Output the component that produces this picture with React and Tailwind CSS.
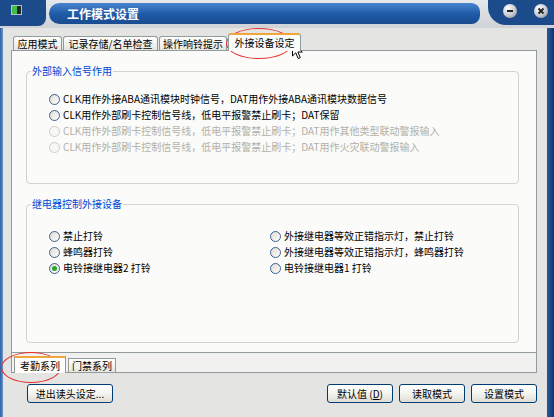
import React from "react";
import clsx from "clsx";

const Radio = ({ label, checked, disabled }) => (
  <div className="flex items-center h-[16px]">
    <span
      className={clsx(
        "w-[11px] h-[11px] rounded-full border flex items-center justify-center shrink-0",
        disabled
          ? "border-[#cfcdc2] bg-[#f7f7f5]"
          : "border-[#3d6193] bg-gradient-to-br from-[#dedbd3] to-white"
      )}
    >
      {checked && <span className="w-[5px] h-[5px] rounded-full bg-[#2aa52a]" />}
    </span>
    <span className={clsx("ml-[3px] whitespace-nowrap", disabled ? "text-[#b2b0a5]" : "text-black")}>
      {label}
    </span>
  </div>
);

const Tab = ({ label, width, active }) =>
  active ? (
    <div
      className="relative z-10 -mb-px h-[18px] flex items-center justify-center rounded-t-[3px] border-x border-t-[2px] border-x-[#919b9c] border-t-[#f2a53a] bg-[#fbfbf9] whitespace-nowrap"
      style={{ width }}
    >
      {label}
    </div>
  ) : (
    <div
      className="h-[14px] flex items-center justify-center rounded-t-[3px] border border-b-0 border-[#919b9c] bg-gradient-to-b from-white to-[#e6e6e0] whitespace-nowrap"
      style={{ width }}
    >
      {label}
    </div>
  );

const Button = ({ children, className }) => (
  <button
    className={clsx(
      "h-[19px] rounded-[3px] border border-[#003c74] bg-gradient-to-b from-white via-[#f4f4f0] to-[#dedcd2] text-black flex items-center justify-center whitespace-nowrap",
      className
    )}
  >
    {children}
  </button>
);

const Sphere = ({ children }) => (
  <div className="w-[14px] h-[14px] rounded-full bg-[radial-gradient(circle_at_35%_30%,#ffffff,#c4c8ce_55%,#7d848e)] flex items-center justify-center">
    {children}
  </div>
);

export default function App() {
  return (
    <div className="relative w-[554px] h-[417px] overflow-hidden bg-[#e4e4e2] font-['Noto_Sans_CJK_SC','Noto_Sans',sans-serif] text-[10px] leading-[12px] text-black">
      {/* title bar */}
      <div className="flex h-[28px] bg-gradient-to-b from-[#e6e8eb] to-[#cfd2d6]">
        <div className="w-[46px] h-[26px] bg-[#1b4b8b] rounded-br-[8px] pl-[11px] pt-[5px]">
          <div className="w-[11px] h-[10px] border border-[#b8c0c8] bg-[#1d2a22] flex">
            <div className="w-[5px] bg-[#3fbf4a]" />
          </div>
        </div>
        <div className="flex-1 pt-[3px] pl-[3px] pr-[8px]">
          <div className="h-[21px] rounded-l-[11px] rounded-r-[9px] bg-gradient-to-b from-[#4a86cf] via-[#1f5ba8] to-[#1a4c8f] pl-[18px] flex items-center text-white font-bold text-[12px]">
            工作模式设置
          </div>
        </div>
        <div className="w-[66px] h-[25px] bg-[#1b4b8b] rounded-bl-[18px] flex items-start pt-[4px] pl-[15px] gap-[17px]">
          <Sphere>
            <div className="w-[6px] h-[2px] bg-[#222]" />
          </Sphere>
          <Sphere>
            <svg width="8" height="8" viewBox="0 0 8 8">
              <path d="M1.5 1.5 L6.5 6.5 M6.5 1.5 L1.5 6.5" stroke="#222" strokeWidth="1.8" />
            </svg>
          </Sphere>
        </div>
      </div>

      {/* body */}
      <div className="flex h-[389px]">
        <div className="w-[3px] bg-gradient-to-r from-[#2a5ea3] to-[#6f96c8]" />
        <div className="flex-1 flex flex-col pl-[8px] pr-[10px]">
          <div className="mt-[5px] h-[17px] flex items-end pl-[2px] gap-[1px]">
            <Tab label="应用模式" width={49} />
            <Tab label="记录存储/名单检查" width={95} />
            <Tab label="操作响铃提示" width={68} />
            <Tab label="外接设备设定" width={73} active />
          </div>

          <div className="h-[303px] border border-[#919b9c] bg-[#fbfbf9] pl-[14px] pt-[14px]">
            <fieldset className="w-[493px] h-[119px] rounded-[4px] border border-[#d3d3cb]">
              <legend className="ml-[4px] px-[1px] text-[#0046d5]">外部输入信号作用</legend>
              <div className="pt-[14px] pl-[22px]">
                <Radio label="CLK用作外接ABA通讯模块时钟信号，DAT用作外接ABA通讯模块数据信号" />
                <Radio label="CLK用作外部刷卡控制信号线，低电平报警禁止刷卡；DAT保留" />
                <Radio label="CLK用作外部刷卡控制信号线，低电平报警禁止刷卡；DAT用作其他类型联动警报输入" disabled />
                <Radio label="CLK用作外部刷卡控制信号线，低电平报警禁止刷卡；DAT用作火灾联动警报输入" disabled />
              </div>
            </fieldset>

            <fieldset className="mt-[14px] w-[493px] h-[145px] rounded-[4px] border border-[#d3d3cb]">
              <legend className="ml-[4px] px-[1px] text-[#0046d5]">继电器控制外接设备</legend>
              <div className="pt-[18px] pl-[22px] grid grid-cols-[221px_1fr]">
                <Radio label="禁止打铃" />
                <Radio label="外接继电器等效正错指示灯，禁止打铃" />
                <Radio label="蜂鸣器打铃" />
                <Radio label="外接继电器等效正错指示灯，蜂鸣器打铃" />
                <Radio label="电铃接继电器2 打铃" checked />
                <Radio label="电铃接继电器1 打铃" />
              </div>
            </fieldset>
          </div>

          <div className="h-[20px] flex items-end pl-[2px] gap-[2px] border-x border-b border-[#919b9c] bg-[#f1f1ef]">
            <div className="relative z-10 -mb-px h-[17px] w-[52px] flex items-center justify-center border-x border-t-[2px] border-x-[#919b9c] border-t-[#f2a53a] bg-white">
              考勤系列
            </div>
            <div className="h-[14px] w-[48px] flex items-center justify-center border border-b-0 border-[#919b9c] bg-gradient-to-b from-white to-[#e6e6e0]">
              门禁系列
            </div>
          </div>

          <div className="mt-[11px] flex pl-[16px]">
            <Button className="w-[86px]">进出读头设定...</Button>
            <div className="ml-auto flex gap-[6px]">
              <Button className="w-[66px]">
                默认值 (<span className="underline">D</span>)
              </Button>
              <Button className="w-[66px]">读取模式</Button>
              <Button className="w-[66px]">设置模式</Button>
            </div>
          </div>
        </div>
        <div className="w-[7px] bg-gradient-to-r from-[#2b5a98] to-[#0f3670]" />
      </div>

      {/* annotations */}
      <div className="absolute left-[226px] top-[28px] w-[66px] h-[31px] rounded-[50%] border-[1.5px] border-[#e8312f]" />
      <div className="absolute left-[1px] top-[352px] w-[60px] h-[31px] rounded-[50%] border-[1.5px] border-[#e8312f]" />
      <svg className="absolute left-[292px] top-[42px]" width="12" height="18" viewBox="0 0 12 18">
        <path d="M0.5 0.5 L0.5 14 L3.8 10.8 L6.2 16.5 L8.3 15.6 L5.9 10 L10.3 10 Z" fill="#fff" stroke="#000" strokeWidth="1" />
      </svg>
    </div>
  );
}
